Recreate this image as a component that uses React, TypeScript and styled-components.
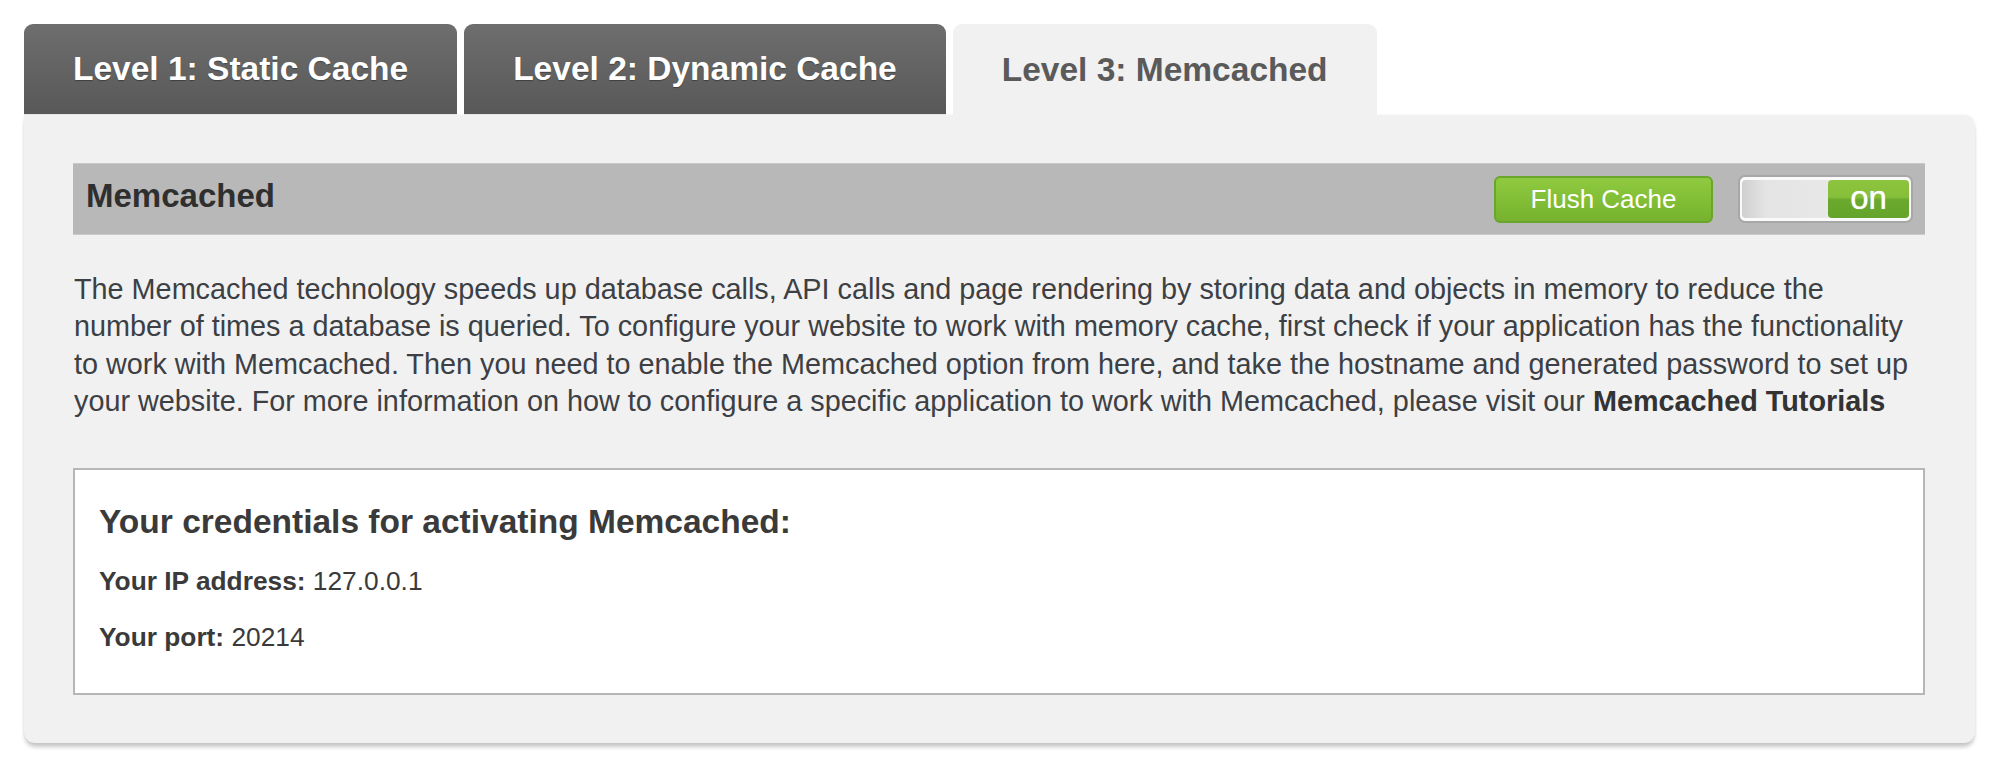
import React from 'react';
import styled, { createGlobalStyle } from 'styled-components';

const GlobalStyle = createGlobalStyle`
  html, body {
    margin: 0;
    padding: 0;
    background: #ffffff;
    font-family: "Liberation Sans", Arial, sans-serif;
  }
`;

const Page = styled.div`
  padding: 24px 25px 20px 24px;
`;

const TabRow = styled.div`
  display: flex;
  gap: 7px;
  align-items: flex-end;
`;

const Tab = styled.div<{ $active?: boolean }>`
  height: 91px;
  padding: 0 49px;
  display: flex;
  align-items: center;
  box-sizing: border-box;
  border-radius: 9px 9px 0 0;
  font-size: 33.5px;
  font-weight: bold;
  line-height: 1;
  cursor: pointer;
  color: ${(p) => (p.$active ? '#5a5a5a' : '#ffffff')};
  background: ${(p) =>
    p.$active ? '#f1f1f1' : 'linear-gradient(#6e6e6e 0%, #636363 50%, #585858 100%)'};
  text-shadow: ${(p) => (p.$active ? 'none' : '0 1px 1px rgba(0,0,0,0.35)')};
  border-bottom: ${(p) => (p.$active ? 'none' : '1px solid #e6e6e6')};
`;

const Panel = styled.div`
  background: #f1f1f1;
  border-radius: 0 11px 11px 11px;
  box-shadow: 0 5px 4px -1px rgba(0, 0, 0, 0.22), 0 0 3px rgba(0, 0, 0, 0.06);
  padding: 48px 50px 48px 49px;
`;

const HeaderBar = styled.div`
  height: 72px;
  box-sizing: border-box;
  background: #b8b8b8;
  border-top: 1px solid #c9c9c9;
  border-bottom: 1px solid #cacaca;
  display: flex;
  align-items: center;
  padding: 0 12px 0 13px;
`;

const HeaderTitle = styled.h2`
  margin: 0 0 6px 0;
  flex: 1;
  font-size: 33px;
  font-weight: bold;
  color: #2f2f2f;
`;

const FlushButton = styled.button`
  width: 219px;
  height: 47px;
  box-sizing: border-box;
  border: 2px solid #6aa62b;
  border-radius: 6px;
  background: linear-gradient(#8fca40 0%, #82bf36 50%, #76b22f 100%);
  color: #ffffff;
  font-family: "Liberation Sans", Arial, sans-serif;
  font-size: 26px;
  padding: 0;
  margin-right: 25px;
  cursor: pointer;
`;

const Toggle = styled.div`
  width: 175px;
  height: 48px;
  box-sizing: border-box;
  border: 2px solid #a7a7a7;
  border-radius: 7px;
  background: #fafafa;
  padding: 3px 2px;
  display: flex;
`;

const Track = styled.div`
  flex: 1;
  display: flex;
  justify-content: flex-end;
  border-radius: 4px;
  background: linear-gradient(90deg, #cfcfcf 0%, #e4e4e4 14%, #ececec 100%);
`;

const Knob = styled.div`
  width: 81px;
  display: flex;
  align-items: center;
  justify-content: center;
  border-radius: 4px;
  background: linear-gradient(#8ec43f 0%, #86bf39 45%, #6aa92d 52%, #63a42a 100%);
  color: #ffffff;
  font-size: 33px;
  line-height: 1;
  padding-bottom: 4px;
  box-sizing: border-box;
  text-shadow: 0 0 1px rgba(255, 255, 255, 0.8);
`;

const Description = styled.p`
  margin: 36px 0 47px 1px;
  font-size: 28.8px;
  line-height: 37.4px;
  color: #3c3f44;
  padding-right: 8px;

  strong {
    font-weight: bold;
    color: #333;
  }
`;

const CredentialsBox = styled.div`
  background: #ffffff;
  border: 2px solid #b6b6b6;
  padding: 32px 24px 39px 24px;
  color: #3a3a3a;
`;

const CredentialsTitle = styled.h3`
  margin: 0 0 24px 0;
  font-size: 33.5px;
  line-height: 1.2;
  font-weight: bold;
`;

const CredentialLine = styled.div`
  font-size: 26.3px;
  line-height: 1.2;
  & + & {
    margin-top: 25px;
  }

  b {
    font-weight: bold;
  }
`;

const tabs = ['Level 1: Static Cache', 'Level 2: Dynamic Cache', 'Level 3: Memcached'];

const App: React.FC = () => {
  const active = 2;

  return (
    <Page>
      <GlobalStyle />
      <TabRow>
        {tabs.map((label, i) => (
          <Tab key={label} $active={i === active}>
            {label}
          </Tab>
        ))}
      </TabRow>
      <Panel>
        <HeaderBar>
          <HeaderTitle>Memcached</HeaderTitle>
          <FlushButton>Flush Cache</FlushButton>
          <Toggle>
            <Track>
              <Knob>on</Knob>
            </Track>
          </Toggle>
        </HeaderBar>
        <Description>
          The Memcached technology speeds up database calls, API calls and page rendering by
          storing data and objects in memory to reduce the number of times a database is
          queried. To configure your website to work with memory cache, first check if your
          application has the functionality to work with Memcached. Then you need to enable the
          Memcached option from here, and take the hostname and generated password to set up
          your website. For more information on how to configure a specific application to work
          with Memcached, please visit our <strong>Memcached Tutorials</strong>
        </Description>
        <CredentialsBox>
          <CredentialsTitle>Your credentials for activating Memcached:</CredentialsTitle>
          <CredentialLine>
            <b>Your IP address:</b> 127.0.0.1
          </CredentialLine>
          <CredentialLine>
            <b>Your port:</b> 20214
          </CredentialLine>
        </CredentialsBox>
      </Panel>
    </Page>
  );
};

export default App;
